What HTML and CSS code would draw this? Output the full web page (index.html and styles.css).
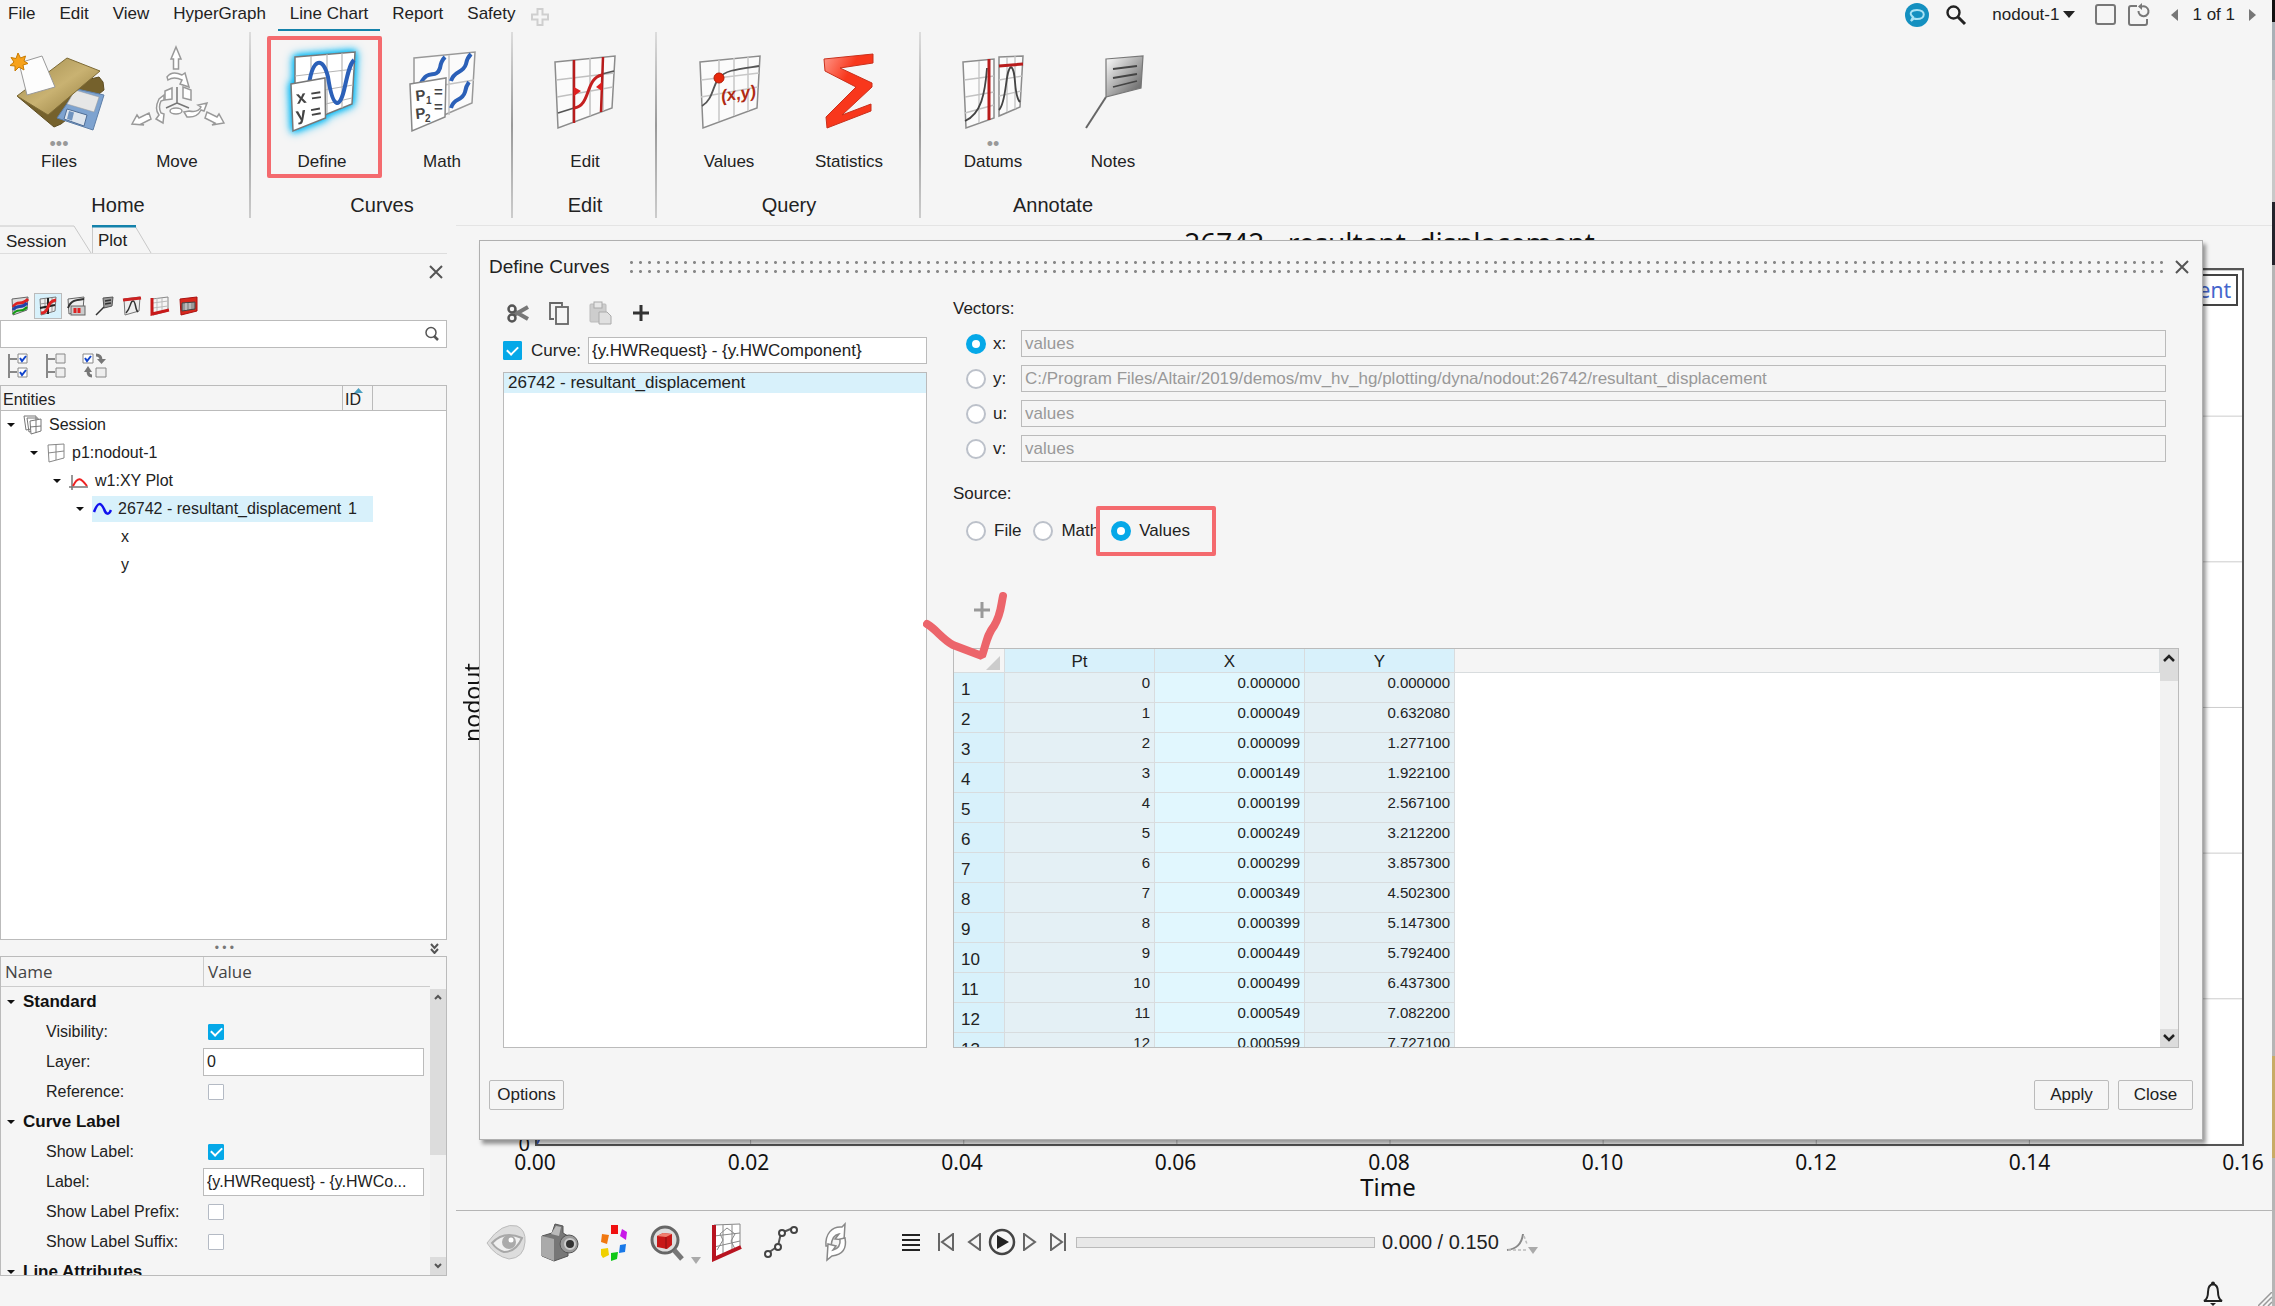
FILE: index.html
```html
<!DOCTYPE html>
<html lang="en">
<head>
  <meta charset="UTF-8" />
  <meta name="viewport" content="width=device-width, initial-scale=1.0"/>
  <title>HyperGraph - Define Curves</title>
  <link rel="stylesheet" href="styles.css">
</head>
<body>
  <div class="app">
    <!-- MENU BAR -->
    <header class="menubar">
      <nav class="menu">
        <a href="#">File</a>
        <a href="#">Edit</a>
        <a href="#">View</a>
        <a href="#">HyperGraph</a>
        <a href="#" class="active">Line Chart</a>
        <a href="#">Report</a>
        <a href="#">Safety</a>
        <button class="icon-btn" aria-label="Add ribbon">
          <svg width="20" height="20" viewBox="0 0 20 20"><path d="M7.500 2h5v5.500H18v5h-5.500V18h-5v-5.500H2v-5h5.500z" fill="#f5f5f5" stroke="#cfcfcf" stroke-width="2"/></svg>
        </button>
      </nav>
      <div class="page-tools">
        <button class="icon-btn" aria-label="Messages">
          <svg width="26" height="26" viewBox="0 0 26 26"><circle cx="13" cy="13" r="12" fill="#1490c0"/><path d="M7 19l2-4c-5-4-1-7 4-7 9 0 9 9 0 9-1 0-2 0-3-.5z" fill="none" stroke="#a8e2f4" stroke-width="2"/></svg>
        </button>
        <button class="icon-btn search-btn" aria-label="Search">
          <svg width="22" height="22" viewBox="0 0 22 22"><circle cx="8.500" cy="8.500" r="6" fill="none" stroke="#222" stroke-width="2.400"/><path d="M13 13l7 7" stroke="#222" stroke-width="3"/></svg>
        </button>
        <button class="page-name">nodout-1<svg width="12" height="7" viewBox="0 0 12 7"><path d="M0 0h12L6 7z" fill="#222"/></svg></button>
        <button class="icon-btn" aria-label="New page">
          <svg width="22" height="22" viewBox="0 0 22 22"><rect x="1" y="1" width="19" height="19" rx="2" fill="none" stroke="#777" stroke-width="2"/></svg>
        </button>
        <button class="icon-btn reset-btn" aria-label="Refresh page">
          <svg width="24" height="24" viewBox="0 0 24 24"><path d="M10 3H4Q2 3 2 5v15q0 2 2 2h14q2 0 2-2v-4" fill="none" stroke="#777" stroke-width="2"/><path d="M15 3.500a5 5 0 1 1-3.500 4.500" fill="none" stroke="#777" stroke-width="2"/><path d="M15 0v7l-4-3.500z" fill="#777"/></svg>
        </button>
        <button class="icon-btn" aria-label="Previous page"><svg width="8" height="12" viewBox="0 0 8 12"><path d="M7 0v12L0 6z" fill="#777"/></svg></button>
        <span class="page-count">1 of 1</span>
        <button class="icon-btn" aria-label="Next page"><svg width="8" height="12" viewBox="0 0 8 12"><path d="M1 0v12l7-6z" fill="#777"/></svg></button>
      </div>
    </header>

    <!-- RIBBON -->
    <div class="ribbon">
      <section class="group group-home">
        <div class="tools">
          <button class="tool">
            <svg class="tool-icon" viewBox="0 0 100 90">
              <defs>
                <linearGradient id="folder" x1="0" y1="0" x2="1" y2="1"><stop offset="0" stop-color="#a08a4c"/><stop offset=".5" stop-color="#c9b272"/><stop offset="1" stop-color="#8a7335"/></linearGradient>
              </defs>
              <path d="M8 52L45 83 52 80 95 46 94 38 90 33z" fill="#75612c" stroke="#5e4d22"/>
              <path d="M68 45L95 51 84 86 48 74z" fill="#7ea3d0" stroke="#5e7fa8"/>
              <path d="M66 46L90 53 85 68 58 60z" fill="#e6e6e6" stroke="#999" stroke-width=".5"/>
              <path d="M58 65L78 71 75 82 55 75z" fill="#dfe6ee" stroke="#4f6d95"/>
              <path d="M60 67l5 1.500-2 8-5-1.500z" fill="#6f93bf"/>
              <path d="M8 52L58 14 91 27 39 71z" fill="url(#folder)" stroke="#7d6a35"/>
              <path d="M10 19L33 12 46 43 18 51z" fill="#fdfdfd" stroke="#999"/>
              <path d="M9 9l2.500 5 5-2-1.500 5 4 2.500-5 1.500 1 5-5-3-4 4v-5l-5-.5 4-3.500-3-4.500 5 1z" fill="#f7a21b" stroke="#c97b00"/>
            </svg>
            <span class="dots">•••</span>
            <span>Files</span>
          </button>
          <button class="tool">
            <svg class="tool-icon" viewBox="0 0 100 90" fill="#fff" stroke="#999" stroke-width="1.500">
              <path d="M49 3L54 15H51.500V25H46.500V15H44z"/>
              <path d="M40 33q5-7 15-2l3-2 4 14-9-3 2-4q-8-4-14 0z"/>
              <path d="M38 47l7-3v11l-7 1zM56 43l8 3v10l-8-2z"/>
              <path d="M50 43v16L39 64M50 59l12 5" fill="none" stroke="#777"/>
              <ellipse cx="49" cy="67" rx="6" ry="3"/>
              <path d="M37 51l-5 4q-5 10 0 16l-3 4 7 4 1-9-3-1q-3-6 0-12l3-1z"/>
              <path d="M57 68l5-1q9 2 12-4l-3-2 9-2-3 8-3-1q-4 8-14 7z"/>
              <path d="M5 80l5-9 2 3 10-5 2 6-10 5 3 1z"/>
              <path d="M97 79l-5-9-2 3-10-5-2 6 10 5-3 2z"/>
            </svg>
            <span class="dots"></span>
            <span>Move</span>
          </button>
        </div>
        <h2>Home</h2>
      </section>
      <section class="group">
        <div class="tools">
          <button class="tool marked">
            <svg class="tool-icon glow" viewBox="0 0 100 90">
              <path d="M23 13L83 8 80 60 23 83z" fill="#fff" stroke="#777" stroke-width="1.500"/>
              <path d="M39 12v64M55 10v59M70 9v55M23 32l59-7M23 51l58-10M23 67l57-13" stroke="#b5b5b5" stroke-width="1.200"/>
              <path d="M37 40C41 14 51 12 56 33 61 66 68 66 73 42 76 28 78 20 82 16" fill="none" stroke="#2b60b8" stroke-width="4"/>
              <path d="M19 40L53 34 53.500 74 21 87z" fill="#fff" stroke="#777" stroke-width="1.500"/>
              <g class="glyph"><text x="25" y="60" transform="rotate(-8 25 60)">x =</text><text x="25" y="77" transform="rotate(-10 25 77)">y =</text></g>
            </svg>
            <span class="dots"></span>
            <span>Define</span>
          </button>
          <button class="tool">
            <svg class="tool-icon" viewBox="0 0 100 90">
              <path d="M22 14L83 8 80 59 22 84z" fill="#fbfbfb" stroke="#999" stroke-width="1.500"/>
              <path d="M57 11v60M22 46l60-10" stroke="#c2c2c2" stroke-width="1.500"/>
              <path d="M29 39C36 24 44 36 48 24q1-7 5-11M59 37C62 26 71 30 74 20q1-6 5-10M59 64C62 53 70 58 73 48q1-6 4-10" fill="none" stroke="#2b60b8" stroke-width="4"/>
              <path d="M18 40L54 34 53 73 20 87z" fill="#fff" stroke="#888" stroke-width="1.500"/>
              <g class="glyph small"><text x="24" y="57" transform="rotate(-6 24 57)">P</text><text x="24" y="75" transform="rotate(-6 24 75)">P</text><text x="42" y="53">=</text><text x="42" y="68">=</text></g>
              <g class="glyph tiny"><text x="34" y="60">1</text><text x="33" y="78">2</text></g>
            </svg>
            <span class="dots"></span>
            <span>Math</span>
          </button>
        </div>
        <h2>Curves</h2>
      </section>
      <section class="group group-wide">
        <div class="tools">
          <button class="tool">
            <svg class="tool-icon" viewBox="0 0 100 90">
              <path d="M20 18L80 12 77 64 23 84z" fill="#fbfbfb" stroke="#8c8c8c" stroke-width="1.500"/>
              <path d="M55 14v58M21 36l58-7M22 53l56-10M38 17v61M68 13v54" stroke="#c0c0c0" stroke-width="1.500"/>
              <path d="M23 69l16-5M67 30l12-3" stroke="#555" stroke-width="1.800"/>
              <path d="M39 16v63M68 13L66 68" stroke="#b81c1c" stroke-width="2.500"/>
              <path d="M39 64C56 62 50 34 67 31" fill="none" stroke="#c42020" stroke-width="3"/>
              <path d="M39 43l7 4-7 5zM67 38l-6 5 6 4z" fill="#e02020"/>
            </svg>
            <span class="dots"></span>
            <span>Edit</span>
          </button>
        </div>
        <h2>Edit</h2>
      </section>
      <section class="group group-wide">
        <div class="tools">
          <button class="tool">
            <svg class="tool-icon" viewBox="0 0 100 90">
              <path d="M21 18L81 12 78 64 24 84z" fill="#fbfbfb" stroke="#8c8c8c" stroke-width="1.500"/>
              <path d="M40 16v61M55 14v58M69 13v54M22 36l58-7M22 53l57-10" stroke="#c8c8c8" stroke-width="1.500"/>
              <path d="M23 62C34 56 34 40 40 34 46 26 60 25 80 22" fill="none" stroke="#555" stroke-width="1.800"/>
              <circle cx="40" cy="34" r="5" fill="#e8280c" stroke="#b01c08"/>
              <text class="xy" x="43" y="58" transform="rotate(-9 43 58)">(x,y)</text>
            </svg>
            <span class="dots"></span>
            <span>Values</span>
          </button>
          <button class="tool">
            <svg class="tool-icon" viewBox="0 0 100 90">
              <defs><linearGradient id="sum" x1="0" y1="0" x2=".7" y2=".6"><stop offset="0" stop-color="#ff9a8c"/><stop offset=".6" stop-color="#f8371c"/></linearGradient></defs>
              <path d="M25 15L74 10V19L41 24 73 39V43L43 71 72 60V67L28 84 27 73 57 43 26 27z" fill="url(#sum)" stroke="#c9301c"/>
            </svg>
            <span class="dots"></span>
            <span>Statistics</span>
          </button>
        </div>
        <h2>Query</h2>
      </section>
      <section class="group group-wide">
        <div class="tools">
          <button class="tool">
            <svg class="tool-icon" viewBox="0 0 100 90">
              <path d="M20 18L51 15V74L23 84zM56 13L80 12 77 63 56 72z" fill="#fbfbfb" stroke="#8c8c8c" stroke-width="1.500"/>
              <path d="M36 17v62M21 36l30-4M22 53l29-5M22 69l29-8M64 13v55M72 12v53M56 36l23-4M56 52l22-5" stroke="#c2c2c2" stroke-width="1.300"/>
              <path d="M22 77C38 70 42 50 44 24M56 66C64 58 62 26 68 23 74 26 70 52 77 58" fill="none" stroke="#444" stroke-width="1.800"/>
              <path d="M46 15V76M56 22L80 20" stroke="#b81c1c" stroke-width="3"/>
            </svg>
            <span class="dots">••</span>
            <span>Datums</span>
          </button>
          <button class="tool">
            <svg class="tool-icon" viewBox="0 0 100 90">
              <defs><linearGradient id="note" x1="0" y1="0" x2="1" y2="1"><stop offset="0" stop-color="#fff"/><stop offset="1" stop-color="#555"/></linearGradient></defs>
              <path d="M43 53L23 84" stroke="#666" stroke-width="2"/>
              <path d="M43 15L80 12 78 44 43 53z" fill="url(#note)" stroke="#777" stroke-width="1.200"/>
              <path d="M50 25l24-3M50 34l24-4M50 43l24-6" stroke="#444" stroke-width="1.800"/>
            </svg>
            <span class="dots"></span>
            <span>Notes</span>
          </button>
        </div>
        <h2>Annotate</h2>
      </section>
    </div>

    <div class="workspace">
      <!-- BROWSER PANEL -->
      <aside class="browser">
        <div class="tabs">
          <button class="tab tab-session"><svg viewBox="0 0 92 28" preserveAspectRatio="none"><path d="M0 1H74L91 28" fill="none" stroke="#c8c8c8"/></svg>Session</button>
          <button class="tab tab-plot"><svg viewBox="0 0 60 28" preserveAspectRatio="none"><path d="M.5 28V1M43 1L59 28" fill="none" stroke="#c8c8c8"/><path d="M0 1H44" stroke="#1482ab" stroke-width="3"/></svg>Plot</button>
        </div>
        <div class="panel-close">
          <button class="icon-btn" aria-label="Close panel"><svg width="14" height="14" viewBox="0 0 14 14"><path d="M1 1l12 12M13 1L1 13" stroke="#555" stroke-width="2"/></svg></button>
        </div>
        <div class="filter-bar">
          <button aria-label="Curves"><svg viewBox="0 0 20 20"><path d="M2 3l16-2-1 13L3 19z" fill="#ddd" stroke="#666"/><path d="M3 11c5-8 8 0 15-8" fill="none" stroke="#d22" stroke-width="3"/><path d="M3 14c5-7 8 0 14-7" fill="none" stroke="#24a" stroke-width="3"/><path d="M3 18c5-7 8 0 14-7" fill="none" stroke="#191" stroke-width="2"/></svg></button>
          <button class="selected" aria-label="Axes"><svg viewBox="0 0 20 20"><path d="M2 3l16-2-1 14L3 19z" fill="#eee" stroke="#777"/><path d="M7 3v15M14 2v14M2 8l15-2" stroke="#999"/><path d="M10 2v16M2 12l15-3" stroke="#222" stroke-width="2"/><path d="M3 17c9 0 5-12 15-13" fill="none" stroke="#d22" stroke-width="3"/></svg></button>
          <button aria-label="Values"><svg viewBox="0 0 20 20"><path d="M2 3l16-2-1 13L3 18z" fill="#eee" stroke="#666"/><path d="M2 12C5 4 10 4 18 3" fill="none" stroke="#333" stroke-width="2"/><rect x="5" y="10" width="14" height="9" fill="#ccc" stroke="#666"/><path d="M9 12v5M13 12v5" stroke="#d22" stroke-width="3"/></svg></button>
          <button aria-label="Notes"><svg viewBox="0 0 20 20"><path d="M9 2l10-1-1 9-8 2z" fill="#999" stroke="#555"/><path d="M11 5l6-1M11 8l6-1M10 11L2 19" stroke="#333" stroke-width="1.500"/></svg></button>
          <button aria-label="Datums"><svg viewBox="0 0 20 20"><path d="M2 3l16-2-1 14L3 19z" fill="#eee" stroke="#777"/><path d="M4 17C9 12 8 5 11 5c3 0 2 9 5 11" fill="none" stroke="#333" stroke-width="1.500"/><path d="M1 4l18-2" stroke="#c22" stroke-width="3"/></svg></button>
          <button aria-label="Borders"><svg viewBox="0 0 20 20"><path d="M2 3l16-2v14L3 19z" fill="#f4f4f4" stroke="#888"/><path d="M7 2v14M12 2v13M3 7l15-2M3 12l15-2" stroke="#bbb"/><path d="M2 2v16l17-4" fill="none" stroke="#c81818" stroke-width="3"/></svg></button>
          <button aria-label="Legends"><svg viewBox="0 0 20 20"><path d="M2 3l17-2v14L3 19z" fill="#d8281c" stroke="#a11"/><path d="M4 7l13-1v7L4 15z" fill="#999" stroke="#444"/><path d="M8 7v7M12 7v6" stroke="#ddd"/></svg></button>
        </div>
        <div class="search">
          <input type="text" aria-label="Search entities">
          <svg width="16" height="16" viewBox="0 0 16 16"><circle cx="7" cy="6.500" r="5" fill="none" stroke="#555" stroke-width="1.500"/><path d="M10 10l4 4" stroke="#555" stroke-width="2.500"/></svg>
        </div>
        <div class="tree-tools">
          <button aria-label="Check all"><svg viewBox="0 0 26 26"><path d="M3 1v24M3 6h8M3 19h8" stroke="#888" stroke-width="2" fill="none"/><path d="M12 1h9v9h-9zM12 15h9v9h-9z" fill="#fff" stroke="#888"/><path d="M14 5l2 3 4-5M14 19l2 3 4-5" fill="none" stroke="#14c" stroke-width="2"/></svg></button>
          <button aria-label="Uncheck all"><svg viewBox="0 0 26 26"><path d="M3 1v24M3 6h8M3 19h8" stroke="#888" stroke-width="2" fill="none"/><path d="M12 1h9v9h-9zM12 15h9v9h-9z" fill="#eee" stroke="#888"/></svg></button>
          <button aria-label="Reverse"><svg viewBox="0 0 26 26"><path d="M1 1h10v9H1z" fill="#fff" stroke="#888"/><path d="M3 5l2 3 4-5" fill="none" stroke="#14c" stroke-width="2"/><path d="M14 15h10v9H14z" fill="#eee" stroke="#888"/><path d="M14 2q5 0 5 5M10 23q-4 0-4-5" fill="none" stroke="#777" stroke-width="3"/><path d="M15 6h9l-4.500 5zM2 19h8l-4-6z" fill="#777"/></svg></button>
        </div>
        <div class="tree">
          <div class="tree-row tree-head"><span>Entities</span><span class="id-head">ID<svg width="9" height="5" viewBox="0 0 9 5"><path d="M0 5l4.500-5L9 5z" fill="#4a9fc0"/></svg></span><span></span></div>
          <div class="tree-row">
            <span class="node"><i class="caret"></i><span class="node-label"><svg viewBox="0 0 20 20" fill="#fff" stroke="#777"><path d="M1 1h12v12L3 15zM4 3h11v12L6 17z"/><path d="M7 6l11-2v12L8 19zM13 5v13M7 12l11-1"/></svg>Session</span></span>
          </div>
          <div class="tree-row">
            <span class="node level-1"><i class="caret"></i><span class="node-label"><svg viewBox="0 0 20 20" fill="#fff" stroke="#888"><path d="M2 2l16-1v14L3 19zM10 1v16M2 10l16-2"/></svg>p1:nodout-1</span></span>
          </div>
          <div class="tree-row">
            <span class="node level-2"><i class="caret"></i><span class="node-label"><svg viewBox="0 0 20 20" fill="none" stroke="#777" stroke-width="1.500"><path d="M3 4v15M0 16h19"/><path d="M4 15C9 5 12 7 18 15" stroke="#e22" stroke-width="2"/></svg>w1:XY Plot</span></span>
          </div>
          <div class="tree-row selected">
            <span class="node level-3"><i class="caret"></i><span class="node-label"><svg viewBox="0 0 20 20"><path d="M2 13C6 2 9 4 12 10c2 6 5 6 7 1" fill="none" stroke="#11e" stroke-width="2.500"/></svg>26742 - resultant_displacement</span></span><span class="node-id">1</span>
          </div>
          <div class="tree-row"><span class="node level-4"><i class="caret none"></i><span class="node-label leaf">x</span></span></div>
          <div class="tree-row"><span class="node level-4"><i class="caret none"></i><span class="node-label leaf">y</span></span></div>
        </div>
        <div class="splitter"><span>• • •</span><svg width="9" height="11" viewBox="0 0 9 11"><path d="M1 1l3.500 4L8 1M1 6l3.500 4L8 6" fill="none" stroke="#555" stroke-width="2"/></svg></div>
        <div class="props">
          <div class="prop-head"><span>Name</span><span>Value</span></div>
          <div class="prop-body">
            <div class="prop-list">
              <div class="prop-group"><i class="caret"></i>Standard</div>
              <div class="prop"><label for="visibility">Visibility:</label><input type="checkbox" id="visibility" checked></div>
              <div class="prop"><label for="layer">Layer:</label><input type="text" id="layer" value="0"></div>
              <div class="prop"><label for="reference">Reference:</label><input type="checkbox" id="reference"></div>
              <div class="prop-group"><i class="caret"></i>Curve Label</div>
              <div class="prop"><label for="showLabel">Show Label:</label><input type="checkbox" id="showLabel" checked></div>
              <div class="prop"><label for="label">Label:</label><input type="text" id="label" value="{y.HWRequest} - {y.HWCo..."></div>
              <div class="prop"><label for="showPrefix">Show Label Prefix:</label><input type="checkbox" id="showPrefix"></div>
              <div class="prop"><label for="showSuffix">Show Label Suffix:</label><input type="checkbox" id="showSuffix"></div>
              <div class="prop-group"><i class="caret"></i>Line Attributes</div>
            </div>
            <div class="scrollbar prop-scroll">
              <span class="thumb"><svg width="8" height="6" viewBox="0 0 8 6"><path d="M1 5l3-3 3 3" fill="none" stroke="#555" stroke-width="2"/></svg></span>
              <span class="end"><svg width="8" height="6" viewBox="0 0 8 6"><path d="M1 1l3 3 3-3" fill="none" stroke="#555" stroke-width="2"/></svg></span>
            </div>
          </div>
        </div>
      </aside>

      <main class="canvas">
        <!-- PLOT WINDOW -->
        <div class="chart">
          <div class="chart-title">26742 - resultant_displacement</div>
          <div class="plot-row">
            <span class="y-label">nodout</span>
            <span class="y-tick">0</span>
            <div class="plot"><span class="legend">26742 - resultant_displacement</span>
              <svg class="trace" width="20" height="40" viewBox="0 0 20 40"><path d="M0 40L20 0" stroke="#3a5fc8" stroke-width="2"/></svg>
            </div>
          </div>
          <div class="x-ticks"><span>0.00</span><span>0.02</span><span>0.04</span><span>0.06</span><span>0.08</span><span>0.10</span><span>0.12</span><span>0.14</span><span>0.16</span></div>
          <div class="x-label">Time</div>
        </div>

        <!-- BOTTOM TOOLBAR -->
        <div class="bottom-bar">
          <div class="view-tools">
            <button aria-label="Show"><svg viewBox="0 0 40 40"><path d="M1 21Q16 0 31 4q9 4 8 16-1 16-16 17Q9 34 1 21z" fill="#ddd" stroke="#bbb"/><path d="M6 21Q18 8 36 16 30 30 18 30 11 28 6 21z" fill="#f0f0f0" stroke="#a8a8a8" stroke-width="2"/><circle cx="23" cy="20" r="7" fill="#aaa"/><circle cx="25" cy="18" r="2.500" fill="#fff"/></svg></button>
            <button aria-label="Capture"><svg viewBox="0 0 40 40"><path d="M2 14l10-3 3-9 8 2v7l5 3v20l-14 5-12-5z" fill="#777" stroke="#555"/><path d="M2 14l12 3v22l-12-5z" fill="#aaa"/><path d="M11 12l5-8 5 1-2 9z" fill="#bbb"/><circle cx="29" cy="22" r="9" fill="#999" stroke="#555"/><circle cx="30" cy="22" r="5" fill="#333" stroke="#ccc" stroke-width="2"/></svg></button>
            <button aria-label="Colors"><svg viewBox="0 0 40 40"><path d="M17 3h7v9h-7z" fill="#f01010"/><path d="M28 7l5 3-1 8-6-4z" fill="#c818e8"/><path d="M8 12l7 1-2 9-6-2z" fill="#f07810"/><path d="M26 23l6-1-1 8-6 1z" fill="#1878e8"/><path d="M7 27l7-1 1 7-6 3-2-3z" fill="#f0d000"/><path d="M17 31l7-1-1 7-6 2z" fill="#10c818"/></svg></button>
            <button aria-label="Fit view" class="has-menu"><svg viewBox="0 0 40 40"><circle cx="17" cy="18" r="13" fill="#ddd" stroke="#666" stroke-width="3"/><path d="M26 28l8 9" stroke="#777" stroke-width="5"/><path d="M9 14l6-3 9 1v11l-5 4-10-2z" fill="#c81818"/><path d="M9 14l9 1 6-3-9-1z" fill="#f08070"/><path d="M18 15v12" stroke="#811"/></svg><svg class="menu-mark" viewBox="0 0 10 7"><path d="M0 0h10L5 7z" fill="#aaa"/></svg></button>
            <button aria-label="Plot"><svg viewBox="0 0 40 40"><path d="M7 3l26-1v23L7 37z" fill="#fff" stroke="#888"/><path d="M16 3v30M25 3v25M7 14l26-3M7 25l26-6M10 28l6-10-3-6 7-6 8 6-4 7 4 8" fill="none" stroke="#888"/><path d="M7 3v34l27-12" fill="none" stroke="#b81420" stroke-width="4"/></svg></button>
            <button aria-label="Polyline"><svg viewBox="0 0 40 40"><path d="M7 31l10-7 3-13 12-5" fill="none" stroke="#555" stroke-width="2"/><g fill="#fff" stroke="#444" stroke-width="2"><circle cx="7" cy="32" r="3"/><circle cx="17" cy="25" r="3"/><circle cx="21" cy="11" r="3"/><circle cx="33" cy="8" r="3"/></g></svg></button>
            <button aria-label="Sync"><svg viewBox="0 0 40 40" fill="#fff" stroke="#888" stroke-width="1.500"><path d="M11 24C10 12 17 4 27 5l3-3-1 16-9-1 4-5q-7 1-8 12z"/><path d="M30 16q3 16-13 18l-5 4 1-16 8 2-3 4q8-2 7-11z"/></svg></button>
          </div>
          <div class="player">
            <button class="player-menu" aria-label="Animation menu"><svg width="18" height="18" viewBox="0 0 18 18"><path d="M0 2h18M0 7h18M0 12h18M0 17h18" stroke="#222" stroke-width="2"/></svg></button>
            <button aria-label="First"><svg width="16" height="18" viewBox="0 0 16 18"><path d="M1 0v18M15 1v16L4 9z" fill="none" stroke="#666" stroke-width="2"/></svg></button>
            <button aria-label="Previous"><svg width="14" height="18" viewBox="0 0 14 18"><path d="M13 1v16L2 9z" fill="none" stroke="#666" stroke-width="2"/></svg></button>
            <button aria-label="Play"><svg width="28" height="28" viewBox="0 0 28 28"><circle cx="14" cy="14" r="12" fill="none" stroke="#444" stroke-width="2.500"/><path d="M9 7l12 7-12 7z" fill="#222"/></svg></button>
            <button aria-label="Next"><svg width="14" height="18" viewBox="0 0 14 18"><path d="M1 1v16l11-8z" fill="none" stroke="#666" stroke-width="2"/></svg></button>
            <button aria-label="Last"><svg width="16" height="18" viewBox="0 0 16 18"><path d="M15 0v18M1 1v16l11-8z" fill="none" stroke="#666" stroke-width="2"/></svg></button>
          </div>
          <input type="range" class="timeline" aria-label="Time" value="0">
          <span class="time">0.000 / 0.150</span>
          <button class="trace-btn has-menu" aria-label="Trace"><svg width="24" height="20" viewBox="0 0 24 20"><path d="M1 18C12 17 16 10 17 2" fill="none" stroke="#888" stroke-width="2"/><path d="M18 4l3 8M2 18h18" stroke="#bbb" stroke-width="1.500" stroke-dasharray="3 2"/></svg><svg class="menu-mark" viewBox="0 0 10 7"><path d="M0 0h10L5 7z" fill="#aaa"/></svg></button>
        </div>
        <div class="status">
          <button class="icon-btn" aria-label="Notifications"><svg width="22" height="25" viewBox="0 0 22 25"><path d="M2 20q4-2 4-9 0-7 5-8 5 1 5 8 0 7 4 9z" fill="none" stroke="#222" stroke-width="2"/><circle cx="11" cy="2.500" r="2" fill="#222"/><path d="M8 22h6l-3 3z" fill="#222"/></svg></button>
          <svg class="grip" width="14" height="14" viewBox="0 0 14 14"><path d="M0 14L14 0M5 14l9-9M10 14l4-4" stroke="#999" stroke-width="1.500"/></svg>
        </div>

        <!-- DEFINE CURVES DIALOG -->
        <section class="dialog" role="dialog" aria-label="Define Curves">
          <header class="dialog-head">
            <h1>Define Curves</h1>
            <span class="drag"></span>
            <button class="icon-btn" aria-label="Close dialog"><svg width="14" height="14" viewBox="0 0 14 14"><path d="M1 1l12 12M13 1L1 13" stroke="#555" stroke-width="2"/></svg></button>
          </header>
          <div class="dialog-body">
            <div class="curve-col">
              <div class="edit-tools">
                <button aria-label="Cut"><svg viewBox="0 0 24 24"><path d="M8 10L22 18M8 14L22 6" stroke="#777" stroke-width="4"/><circle cx="6" cy="8" r="3.500" fill="none" stroke="#555" stroke-width="2.500"/><circle cx="6" cy="17" r="3.500" fill="none" stroke="#555" stroke-width="2.500"/></svg></button>
                <button aria-label="Copy"><svg viewBox="0 0 24 24"><path d="M7 18H3V2h12v3" fill="none" stroke="#666" stroke-width="1.800"/><rect x="9" y="6" width="12" height="17" fill="none" stroke="#666" stroke-width="1.800"/></svg></button>
                <button aria-label="Paste" disabled><svg viewBox="0 0 24 24"><rect x="2" y="3" width="16" height="18" rx="1" fill="#cdcdcd" stroke="#bbb"/><rect x="6" y="1" width="8" height="6" fill="#e6e6e6" stroke="#aaa"/><path d="M11 11h8l4 4v8H11z" fill="#e0e0e0" stroke="#aaa"/></svg></button>
                <button aria-label="Add curve"><svg viewBox="0 0 24 24"><path d="M12 4v16M4 12h16" stroke="#333" stroke-width="3"/></svg></button>
              </div>
              <div class="curve-row">
                <input type="checkbox" id="curveOn" checked><label for="curveOn">Curve:</label>
                <input type="text" aria-label="Curve label" value="{y.HWRequest} - {y.HWComponent}">
              </div>
              <ul class="curve-list"><li>26742 - resultant_displacement</li></ul>
            </div>
            <div class="vector-col">
              <h3>Vectors:</h3>
              <div class="vectors">
                <div class="vector"><input type="radio" name="vector" id="vx" checked><label for="vx">x:</label><input type="text" aria-label="x source" value="values" disabled></div>
                <div class="vector"><input type="radio" name="vector" id="vy"><label for="vy">y:</label><input type="text" aria-label="y source" value="C:/Program Files/Altair/2019/demos/mv_hv_hg/plotting/dyna/nodout:26742/resultant_displacement" disabled></div>
                <div class="vector"><input type="radio" name="vector" id="vu"><label for="vu">u:</label><input type="text" aria-label="u source" value="values" disabled></div>
                <div class="vector"><input type="radio" name="vector" id="vv"><label for="vv">v:</label><input type="text" aria-label="v source" value="values" disabled></div>
              </div>
              <h3 class="source-title">Source:</h3>
              <div class="source">
                <label><input type="radio" name="source">File</label>
                <label><input type="radio" name="source">Math</label>
                <label class="boxed"><input type="radio" name="source" checked>Values</label>
              </div>
              <button class="add-row" aria-label="Add row"><svg width="16" height="16" viewBox="0 0 16 16"><path d="M8 0v16M0 8h16" stroke="#999" stroke-width="3"/></svg></button>
              <div class="sheet">
                <div class="sheet-view">
                  <table>
                    <thead><tr><th class="num corner"><svg width="14" height="14" viewBox="0 0 14 14"><path d="M14 0v14H0z" fill="#ccc"/></svg></th><th>Pt</th><th>X</th><th>Y</th><th class="rest"></th></tr></thead>
                    <tbody>
                      <tr><th>1</th><td>0</td><td>0.000000</td><td>0.000000</td><td></td></tr>
                      <tr><th>2</th><td>1</td><td>0.000049</td><td>0.632080</td><td></td></tr>
                      <tr><th>3</th><td>2</td><td>0.000099</td><td>1.277100</td><td></td></tr>
                      <tr><th>4</th><td>3</td><td>0.000149</td><td>1.922100</td><td></td></tr>
                      <tr><th>5</th><td>4</td><td>0.000199</td><td>2.567100</td><td></td></tr>
                      <tr><th>6</th><td>5</td><td>0.000249</td><td>3.212200</td><td></td></tr>
                      <tr><th>7</th><td>6</td><td>0.000299</td><td>3.857300</td><td></td></tr>
                      <tr><th>8</th><td>7</td><td>0.000349</td><td>4.502300</td><td></td></tr>
                      <tr><th>9</th><td>8</td><td>0.000399</td><td>5.147300</td><td></td></tr>
                      <tr><th>10</th><td>9</td><td>0.000449</td><td>5.792400</td><td></td></tr>
                      <tr><th>11</th><td>10</td><td>0.000499</td><td>6.437300</td><td></td></tr>
                      <tr><th>12</th><td>11</td><td>0.000549</td><td>7.082200</td><td></td></tr>
                      <tr><th>13</th><td>12</td><td>0.000599</td><td>7.727100</td><td></td></tr>
                    </tbody>
                  </table>
                </div>
                <div class="scrollbar">
                  <span class="thumb"><svg width="12" height="8" viewBox="0 0 12 8"><path d="M1 7l5-5 5 5" fill="none" stroke="#222" stroke-width="2.500"/></svg></span>
                  <span class="end"><svg width="12" height="8" viewBox="0 0 12 8"><path d="M1 1l5 5 5-5" fill="none" stroke="#222" stroke-width="2.500"/></svg></span>
                </div>
                <svg class="tick-mark" width="84" height="72" viewBox="0 0 84 72"><path d="M4 33C14 39 18 47 30 54L59 65C64 50 64 44 71 35 78 24 78 14 80 5" fill="none" stroke="#ec656b" stroke-width="8" stroke-linecap="round" stroke-linejoin="bevel"/></svg>
              </div>
            </div>
          </div>
          <footer class="dialog-foot">
            <button class="btn">Options</button>
            <span class="spacer"></span>
            <button class="btn">Apply</button>
            <button class="btn">Close</button>
          </footer>
        </section>
      </main>
    </div>
  </div>
  <div class="window-edge"></div>
</body>
</html>
```
FILE: styles.css
```css
* {
  box-sizing: border-box;
}
body {
  margin: 0;
  height: 100vh;
  display: flex;
  overflow: hidden;
  background: #f5f5f5;
  color: #222;
  font-family: "Liberation Sans", Arial, sans-serif;
  font-size: 17px;
  line-height: 20px;
}
button {
  margin: 0;
  padding: 0;
  border: 0;
  background: none;
  color: inherit;
  font: inherit;
}
h1, h2, h3 {
  margin: 0;
  font-weight: normal;
}
svg {
  display: block;
  flex: none;
}
.app {
  flex: 1;
  min-width: 0;
  display: flex;
  flex-direction: column;
}
/* slice of the desktop behind the window */
.window-edge {
  width: 3px;
  background: linear-gradient(#111 0 22px, #a9b0b6 22px 80px, #c8c8c8 80px 202px, #24242c 202px 265px, #b5b5b5 265px 1056px, #c8ac66 1056px 1158px, #b5b5b5 1158px);
}
.icon-btn {
  display: flex;
}

/* MENU BAR */
.menubar {
  display: flex;
  justify-content: space-between;
  height: 31px;
}
.menu {
  display: flex;
  align-items: center;
}
.menu a {
  height: 31px;
  padding: 4px 12px 0;
  color: inherit;
  text-decoration: none;
}
.menu a:first-child {
  padding-left: 8px;
}
.menu a.active {
  border-bottom: 2px solid #1482ab;
}
.menu .icon-btn {
  margin: 2px 0 0 2px;
}
.page-tools {
  display: flex;
  align-items: center;
  padding: 0 16px 2px 0;
}
.search-btn {
  margin: 0 25px 0 15px;
}
.page-name {
  display: flex;
  align-items: center;
  gap: 4px;
  margin-right: 20px;
}
.reset-btn {
  margin: 0 20px 0 10px;
}
.page-count {
  margin: 0 13px;
}

/* RIBBON */
.ribbon {
  display: flex;
  height: 194px;
}
.group {
  position: relative;
  padding: 5px 11px 0;
  text-align: center;
}
.group-wide {
  padding-left: 12px;
  padding-right: 12px;
}
.group-home {
  padding-left: 0;
  padding-right: 15px;
}
.group-home .tool {
  width: 118px;
}
.group:not(:last-child)::after {
  content: "";
  position: absolute;
  top: 1px;
  right: 0;
  width: 2px;
  height: 186px;
  background: linear-gradient(#ddd, #999 50%, #ccc);
}
.tools {
  display: flex;
}
.tool {
  position: relative;
  width: 120px;
  height: 142px;
  padding-top: 8px;
  display: flex;
  flex-direction: column;
  align-items: center;
}
.tool-icon {
  width: 100px;
  height: 90px;
}
.glow {
  filter: drop-shadow(0 0 3px #00b8f5) drop-shadow(0 0 4px #00b8f5);
}
.glyph {
  font-size: 18px;
  font-weight: bold;
  fill: #444;
}
.glyph.small {
  font-size: 15px;
}
.glyph.tiny {
  font-size: 10px;
}
.xy {
  font-size: 17px;
  font-style: italic;
  font-weight: bold;
  fill: #b02a14;
}
.dots {
  height: 18px;
  color: #999;
  font-size: 18px;
  line-height: 20px;
}
.marked::after {
  content: "";
  position: absolute;
  inset: 0 0 0 5px;
  border: 4px solid #f46a6e;
  border-radius: 2px;
}
.group h2 {
  margin-top: 15px;
  font-size: 20px;
  line-height: 24px;
}

/* BROWSER PANEL */
.workspace {
  flex: 1;
  min-height: 0;
  display: flex;
}
.browser {
  width: 447px;
  padding-bottom: 30px;
  display: flex;
  flex-direction: column;
  font-size: 16px;
}
.tabs {
  display: flex;
  height: 29px;
  border-bottom: 1px solid #ddd;
}
.tab {
  position: relative;
  padding: 5px 0 0 6px;
  text-align: left;
  font-size: 17px;
}
.tab svg {
  position: absolute;
  inset: 0;
  width: 100%;
  height: 100%;
}
.tab-session {
  width: 92px;
}
.tab-plot {
  width: 60px;
  padding-top: 3px;
}
.panel-close {
  display: flex;
  justify-content: flex-end;
  padding: 11px 4px 13px;
}
.filter-bar {
  display: flex;
  align-items: center;
  height: 28px;
  padding-left: 6px;
}
.filter-bar button {
  width: 28px;
  height: 26px;
  padding: 2px 3px;
  border: 1px solid transparent;
}
.filter-bar button.selected {
  background: #d8f1fb;
  border-color: #bbb;
}
.filter-bar svg {
  width: 20px;
  height: 20px;
}
.search {
  display: flex;
  align-items: center;
  height: 28px;
  padding-right: 6px;
  background: #fff;
  border: 1px solid #bbb;
}
.search input {
  flex: 1;
  outline: none;
}
.tree-tools {
  display: flex;
  gap: 12px;
  padding: 5px 6px 6px;
}
.tree-tools svg {
  width: 26px;
  height: 26px;
}
.tree {
  flex: 1;
  min-height: 0;
  background: #fff;
  border: 1px solid #bbb;
}
.tree-row {
  display: grid;
  grid-template-columns: 342px 30px 1fr;
  height: 28px;
}
.tree-head {
  height: 25px;
  background: #f5f5f5;
  border-bottom: 1px solid #bbb;
}
.tree-head span {
  padding: 4px 2px 0;
  border-right: 1px solid #bbb;
}
.tree-head span:last-child {
  border-right: 0;
}
.id-head {
  position: relative;
}
.id-head svg {
  position: absolute;
  top: 2px;
  right: 9px;
}
.node {
  display: flex;
  align-items: center;
  padding-left: 2px;
}
.level-1 {
  padding-left: 25px;
}
.level-2 {
  padding-left: 48px;
}
.level-3 {
  padding-left: 71px;
}
.level-4 {
  padding-left: 94px;
}
.caret {
  width: 20px;
  flex: none;
}
.caret:not(.none)::before {
  content: "";
  display: block;
  margin-left: 4px;
  width: 0;
  border: 4px solid transparent;
  border-top-color: #111;
  border-bottom: 0;
}
.node-label {
  flex: 1;
  height: 26px;
  display: flex;
  align-items: center;
  gap: 6px;
}
.node-label svg {
  width: 20px;
  height: 20px;
}
.leaf {
  padding-left: 6px;
}
.tree-row.selected .node-label,
.tree-row.selected .node-id {
  background: #d8f1fb;
}
.node-id {
  height: 26px;
  margin-top: 1px;
  padding: 3px 5px;
}
.splitter {
  display: flex;
  height: 16px;
  align-items: center;
  justify-content: flex-end;
  padding-right: 8px;
}
.splitter span {
  margin-right: 196px;
  color: #777;
  font-size: 12px;
  line-height: 10px;
}

/* PROPERTIES */
.props {
  height: 320px;
  display: flex;
  flex-direction: column;
  border: 1px solid #bbb;
}
.prop-head {
  display: grid;
  grid-template-columns: 203px 1fr;
  height: 30px;
  margin-right: 16px;
  border-bottom: 1px solid #ccc;
  font-family: "Open Sans", sans-serif;
  font-size: 17px;
  line-height: 30px;
  color: #444;
}
.prop-head span {
  padding-left: 4px;
}
.prop-head span:first-child {
  border-right: 1px solid #ccc;
}
.prop-body {
  flex: 1;
  min-height: 0;
  display: flex;
}
.prop-list {
  flex: 1;
  overflow: hidden;
}
.prop, .prop-group {
  display: flex;
  align-items: center;
  height: 30px;
}
.prop-group {
  padding-left: 2px;
  font-size: 17px;
  font-weight: bold;
  color: #111;
}
.prop label {
  width: 202px;
  padding-left: 45px;
}
.prop input[type="checkbox"] {
  margin-left: 5px;
}
.prop input[type="text"] {
  flex: 1;
  min-width: 0;
  height: 28px;
  margin-right: 6px;
}
.prop-scroll {
  margin-top: 2px;
}
.scrollbar {
  width: 16px;
  display: flex;
  flex-direction: column;
  justify-content: space-between;
  background: #f2f2f2;
}
.scrollbar span {
  display: flex;
  justify-content: center;
  background: #dcdcdc;
}
.scrollbar .thumb {
  height: 32px;
  padding-top: 5px;
}
.scrollbar .end {
  height: 18px;
  align-items: center;
}
.prop-scroll .thumb {
  height: 166px;
}

/* FORM CONTROLS */
input[type="text"] {
  padding: 0 3px;
  background: #fff;
  border: 1px solid #bbb;
  color: #222;
  font: inherit;
}
input[type="text"]:disabled {
  background: #f5f5f5;
  color: #999;
}
.search input[type="text"] {
  border: 0;
}
input[type="checkbox"], input[type="radio"] {
  appearance: none;
  flex: none;
  margin: 0;
  background: #fff;
  border: 1px solid #b4bac4;
}
input[type="checkbox"] {
  width: 16px;
  height: 16px;
  border-radius: 1px;
  display: flex;
  align-items: center;
  justify-content: center;
}
input[type="checkbox"]:checked {
  background: #05a8e8;
  border-color: #05a8e8;
}
input[type="checkbox"]:checked::before {
  content: "";
  width: 9px;
  height: 5px;
  margin-bottom: 3px;
  border: solid #fff;
  border-width: 0 0 2px 2px;
  transform: rotate(-45deg);
}
input[type="radio"] {
  width: 20px;
  height: 20px;
  border-width: 2px;
  border-color: #bcc1ca;
  border-radius: 50%;
}
input[type="radio"]:checked {
  border: 6px solid #05a8e8;
}

/* PLOT WINDOW */
.canvas {
  position: relative;
  flex: 1;
  min-width: 0;
  margin-left: 9px;
  display: flex;
  flex-direction: column;
  border-top: 1px solid #e4e4e4;
}
.chart {
  flex: 1;
  min-height: 0;
  display: flex;
  flex-direction: column;
  padding-right: 8px;
  color: #111;
  font-family: "Noto Sans", sans-serif;
  border-bottom: 1px solid #b5b5b5;
}
.chart-title {
  padding-left: 59px;
  height: 42px;
  text-align: center;
  font-size: 28px;
  line-height: 32px;
}
.plot-row {
  flex: 1;
  min-height: 0;
  display: flex;
  margin-right: 20px;
}
.y-label {
  writing-mode: vertical-rl;
  transform: rotate(180deg);
  width: 32px;
  padding-top: 8px;
  text-align: center;
  font-size: 23px;
  line-height: 32px;
}
.y-tick {
  align-self: flex-end;
  width: 47px;
  height: 14px;
  padding-right: 5px;
  text-align: right;
  font-size: 20px;
  line-height: 24px;
}
.plot {
  position: relative;
  flex: 1;
  border: 2px solid #555;
  background:
    linear-gradient(#ccc 0 1px, transparent 1px) 0 0 / 100% calc(100% / 6),
    linear-gradient(90deg, #bbb 0 1px, transparent 1px) 0 0 / calc(100% / 8) 100%,
    #fff;
}
.legend {
  position: absolute;
  top: 4px;
  right: 4px;
  padding: 0 5px;
  background: #fff;
  border: 2px solid #444;
  color: #4466cc;
  font-size: 21px;
  line-height: 28px;
}
.trace {
  position: absolute;
  left: 0;
  bottom: 0;
}
.x-ticks {
  display: flex;
  justify-content: space-between;
  margin: 3px 0 0 58px;
  font-size: 21px;
  line-height: 26px;
}
.x-ticks span {
  width: 42px;
  text-align: center;
}
.x-label {
  height: 35px;
  padding-left: 56px;
  text-align: center;
  font-size: 24px;
  line-height: 24px;
}

/* BOTTOM TOOLBAR */
.bottom-bar {
  display: flex;
  align-items: center;
  height: 62px;
  padding-left: 30px;
}
.view-tools {
  display: flex;
  gap: 14px;
}
.view-tools button {
  width: 40px;
}
.has-menu {
  position: relative;
}
.menu-mark {
  position: absolute;
  right: -13px;
  bottom: -2px;
  width: 10px;
  height: 7px;
}
.view-tools .has-menu {
  margin-right: 5px;
}
.player {
  display: flex;
  margin: 0 4px 0 42px;
}
.player button {
  width: 28px;
  display: flex;
  align-items: center;
  justify-content: center;
}
.player .player-menu {
  margin-right: 7px;
}
.timeline {
  appearance: none;
  width: 299px;
  height: 11px;
  margin: 0;
  background: #e8e8e8;
  border: 1px solid #bbb;
}
.timeline::-webkit-slider-thumb {
  appearance: none;
  width: 0;
}
.time {
  margin: 0 7px;
  font-size: 20px;
}
.trace-btn .menu-mark {
  right: -8px;
}
.status {
  display: flex;
  justify-content: flex-end;
  align-items: flex-end;
  gap: 34px;
  height: 33px;
}

/* DIALOG */
.dialog {
  position: absolute;
  top: 14px;
  right: 69px;
  bottom: 166px;
  left: 23px;
  display: flex;
  flex-direction: column;
  background: #f5f5f5;
  border: 1px solid #b0b0b0;
  box-shadow: 3px 4px 4px rgba(0, 0, 0, 0.4);
}
.dialog-head {
  display: flex;
  align-items: center;
  gap: 12px;
  height: 52px;
  padding: 0 13px 0 9px;
}
.dialog-head h1 {
  width: 126px;
  font-size: 19px;
}
.drag {
  flex: 1;
  height: 18px;
  background: radial-gradient(circle, #888 1px, transparent 2px) 0 0 / 9px 9px;
}
.dialog-body {
  flex: 1;
  min-height: 0;
  display: flex;
  gap: 26px;
  padding: 0 23px;
}
.curve-col {
  width: 424px;
  display: flex;
  flex-direction: column;
}
.edit-tools {
  display: flex;
  align-items: flex-start;
  gap: 17px;
  height: 44px;
  padding: 8px 0 0 3px;
}
.edit-tools svg {
  width: 24px;
  height: 24px;
}
.curve-row {
  display: flex;
  align-items: center;
  gap: 9px;
}
.curve-row input[type="checkbox"] {
  width: 19px;
  height: 19px;
}
.curve-row label {
  width: 48px;
}
.curve-row input[type="text"] {
  flex: 1;
  min-width: 0;
  height: 27px;
}
.curve-list {
  flex: 1;
  margin: 8px 0 0;
  padding: 0;
  background: #fff;
  border: 1px solid #bbb;
  list-style: none;
}
.curve-list li {
  padding-left: 4px;
  background: #d8f1fb;
}
.vector-col {
  flex: 1;
  min-width: 0;
  display: flex;
  flex-direction: column;
}
.vector-col h3 {
  margin: 6px 0 7px;
  font-size: 17px;
}
.vector-col .source-title {
  margin: 18px 0 2px;
}
.vector {
  display: flex;
  align-items: center;
  height: 35px;
  padding: 0 13px;
}
.vector label {
  width: 35px;
  padding-left: 7px;
}
.vector input[type="text"] {
  flex: 1;
  height: 27px;
}
.source {
  display: flex;
  height: 50px;
  padding-left: 13px;
}
.source label {
  display: flex;
  align-items: center;
  gap: 8px;
  margin-right: 12px;
}
.source .boxed {
  width: 120px;
  margin-left: -15px;
  padding-left: 11px;
  background: #f5f5f5;
  border: 4px solid #f46a6e;
  border-radius: 2px;
}
.add-row {
  align-self: flex-start;
  margin: 46px 0 30px 21px;
}
.sheet {
  position: relative;
  flex: 1;
  min-height: 0;
  display: flex;
  background: #fff;
  border: 1px solid #bbb;
}
.sheet-view {
  flex: 1;
  overflow: hidden;
}
.sheet .scrollbar {
  width: 18px;
}
.tick-mark {
  position: absolute;
  left: -31px;
  top: -58px;
}
table {
  width: 100%;
  table-layout: fixed;
  border-collapse: separate;
  border-spacing: 0;
}
th, td {
  padding: 0;
  border-right: 1px solid #d8dcde;
  border-bottom: 1px solid #d8dcde;
}
thead th {
  width: 150px;
  height: 24px;
  padding-top: 2px;
  background: #d8f1fb;
  font-weight: normal;
}
thead .num {
  width: 51px;
}
thead .rest {
  width: auto;
}
thead .corner, thead .rest {
  background: #f5f5f5;
}
.corner svg {
  margin: 3px 0 0 32px;
}
tbody th {
  height: 30px;
  padding: 4px 0 0 7px;
  background: #d8f1fb;
  font-weight: normal;
  text-align: left;
}
td {
  height: 30px;
  padding-right: 4px;
  background: #e4f0f5;
  font-size: 15px;
  line-height: 20px;
  text-align: right;
  vertical-align: top;
}
td:nth-child(3) {
  background: #e1f7fe;
}
td:last-child {
  background: #fff;
  border: 0;
}
.dialog-foot {
  display: flex;
  gap: 9px;
  padding: 32px 9px 29px;
}
.spacer {
  flex: 1;
}
.btn {
  width: 75px;
  height: 30px;
  border: 1px solid #bbb;
  border-radius: 2px;
}
```
